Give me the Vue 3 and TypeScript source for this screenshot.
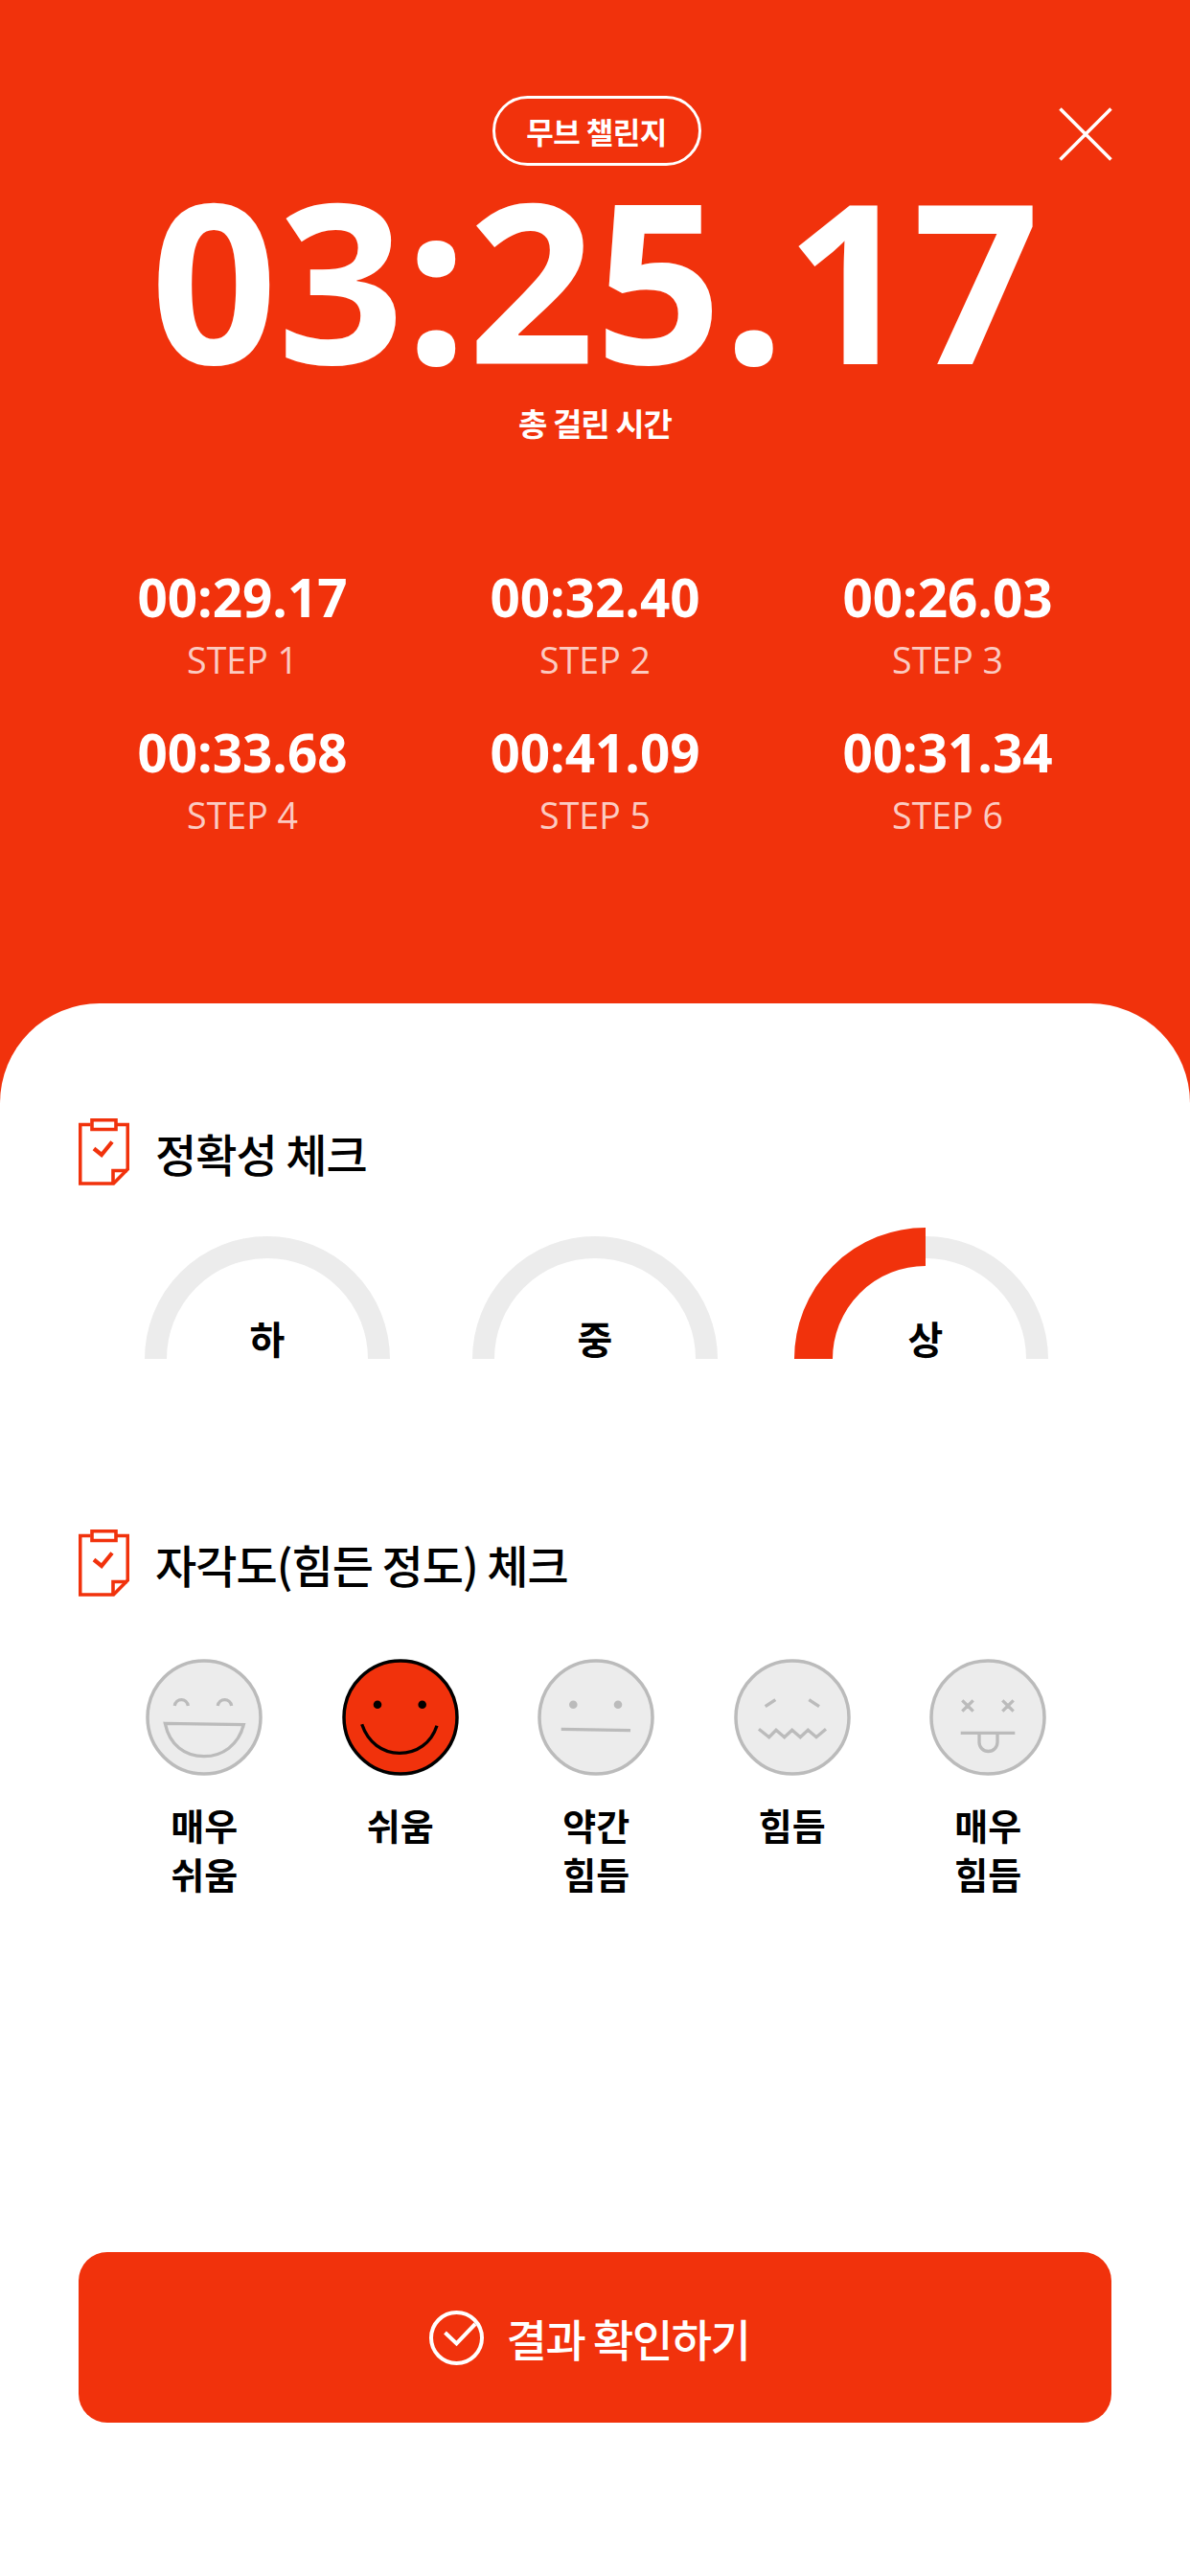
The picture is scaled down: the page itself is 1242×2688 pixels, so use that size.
<script setup lang="ts">
const steps = [
  { time: '00:29.17', label: 'STEP 1' },
  { time: '00:32.40', label: 'STEP 2' },
  { time: '00:26.03', label: 'STEP 3' },
  { time: '00:33.68', label: 'STEP 4' },
  { time: '00:41.09', label: 'STEP 5' },
  { time: '00:31.34', label: 'STEP 6' },
]
const levels = [
  { label: '하', active: false },
  { label: '중', active: false },
  { label: '상', active: true },
]
const faces = [
  { kind: 'laugh', lines: ['매우', '쉬움'] },
  { kind: 'smile', lines: ['쉬움'] },
  { kind: 'flat', lines: ['약간', '힘듬'] },
  { kind: 'wavy', lines: ['힘듬'] },
  { kind: 'dead', lines: ['매우', '힘듬'] },
]
</script>

<template>
  <div class="page">
    <header class="hero">
      <svg class="close" viewBox="0 0 56 56" aria-label="닫기">
        <path d="M1.500 1.500 54.500 54.500M54.500 1.500 1.500 54.500" />
      </svg>
      <div class="pill">무브 챌린지</div>
      <div class="total">03:25.17</div>
      <div class="total-label">총 걸린 시간</div>
      <div class="steps">
        <div v-for="s in steps" :key="s.label" class="step">
          <div class="step-time">{{ s.time }}</div>
          <div class="step-label">{{ s.label }}</div>
        </div>
      </div>
    </header>

    <main class="sheet">
      <section class="section">
        <h2 class="title">
          <svg class="clip" viewBox="0 0 53 70">
            <path d="M12.500 6.500H1.700V68H36.500L51.300 53V6.500H40" />
            <path d="M14 1.700H39V11.500H14Z" />
            <path d="M36 68V54.500H51" />
            <path class="tick" d="M16 31.500 24 38 35 24.500" />
          </svg>
          <span>정확성 체크</span>
        </h2>
        <div class="gauges">
          <div v-for="l in levels" :key="l.label" class="gauge">
            <svg class="arc" viewBox="0 0 256 128">
              <path class="track" d="M11.500 128A116.500 116.500 0 0 1 244.500 128" />
              <path v-if="l.active" class="fill" d="M11 128A117 117 0 0 1 128 11" />
            </svg>
            <span class="gauge-label">{{ l.label }}</span>
          </div>
        </div>
      </section>

      <section class="section second">
        <h2 class="title">
          <svg class="clip" viewBox="0 0 53 70">
            <path d="M12.500 6.500H1.700V68H36.500L51.300 53V6.500H40" />
            <path d="M14 1.700H39V11.500H14Z" />
            <path d="M36 68V54.500H51" />
            <path class="tick" d="M16 31.500 24 38 35 24.500" />
          </svg>
          <span>자각도(힘든 정도) 체크</span>
        </h2>
        <div class="faces">
          <div v-for="f in faces" :key="f.kind" class="face-cell">
            <svg class="face" :class="{ on: f.kind === 'smile' }" viewBox="0 0 122 122">
              <circle class="head" cx="61" cy="61" r="59" />
              <template v-if="f.kind === 'laugh'">
                <path d="M30.300 49C31.500 40.500 43.100 40.500 44.300 49M75.300 49C76.500 40.500 88.400 40.500 89.600 49" />
                <path d="M20.300 67.300 102.300 68.700C97 90 80 101.700 61 101.700 41 101.700 25 90 20.300 67.300Z" />
              </template>
              <template v-else-if="f.kind === 'smile'">
                <circle class="dot" cx="37" cy="47.700" r="4.300" />
                <circle class="dot" cx="83.700" cy="47.700" r="4.300" />
                <path d="M20.700 68.300C27 87 42 98.300 60 98.300 78 98.300 93 88 99 69.700" />
              </template>
              <template v-else-if="f.kind === 'flat'">
                <circle class="dot" cx="37.300" cy="47.700" r="4.300" />
                <circle class="dot" cx="84" cy="47.700" r="4.300" />
                <path d="M24.700 73.300 97 74.700" />
              </template>
              <template v-else-if="f.kind === 'wavy'">
                <path d="M32.700 49.700 43.300 42.700M78.300 42.700 89 49.700" />
                <path d="M26 73.300 36.700 81.700 44 74.300 52.700 81.700 60.700 74.300 69.300 81.700 77.300 74.300 86 81.700 96 73.300" />
              </template>
              <template v-else>
                <path d="M34.300 43.300 45.700 54.700M45.700 43.300 34.300 54.700M76.300 43.300 87.700 54.700M87.700 43.300 76.300 54.700" />
                <path d="M32.700 77.300H89.300M52 77.300V87A9.500 9.500 0 0 0 71 87V77.300" />
              </template>
            </svg>
            <div class="face-label">
              <div v-for="line in f.lines" :key="line">{{ line }}</div>
            </div>
          </div>
        </div>
      </section>

      <button class="cta" type="button">
        <svg class="cta-icon" viewBox="0 0 57 57">
          <circle cx="28.500" cy="28.500" r="26.500" />
          <path d="M16.500 23 28.500 34.500 48 14" />
        </svg>
        <span>결과 확인하기</span>
      </button>
    </main>
  </div>
</template>

<style>
html, body { margin: 0; background: #fff; }
</style>

<style scoped>
.page {
  position: relative;
  width: 1242px;
  height: 2688px;
  display: flex;
  flex-direction: column;
  background: #f1320c;
  font-family: "Open Sans", "Noto Sans CJK KR", sans-serif;
  overflow: hidden;
}
.hero {
  position: relative;
  height: 1047px;
  padding-top: 100px;
  box-sizing: border-box;
  display: flex;
  flex-direction: column;
  align-items: center;
  color: #fff;
}
.close {
  position: absolute;
  top: 112px;
  left: 1104.500px;
  width: 56px;
  height: 56px;
  fill: none;
  stroke: #fff;
  stroke-width: 3.500;
}
.pill {
  width: 218px;
  height: 73px;
  margin-left: 3px;
  box-sizing: border-box;
  border: 3px solid #fff;
  border-radius: 37px;
  display: flex;
  align-items: center;
  justify-content: center;
  font-family: "Noto Sans CJK KR", sans-serif;
  font-size: 31px;
  font-weight: 700;
  letter-spacing: -0.5px;
}
.total {
  margin-top: -7px;
  font-size: 232px;
  font-weight: 700;
  line-height: 248px;
  white-space: nowrap;
}
.total-label {
  margin-top: 4px;
  font-family: "Noto Sans CJK KR", sans-serif;
  font-size: 33px;
  font-weight: 700;
  line-height: 46px;
  letter-spacing: -1px;
}
.steps {
  margin-top: 126px;
  width: 1104px;
  display: grid;
  grid-template-columns: repeat(3, 368px);
  row-gap: 30px;
  text-align: center;
}
.step-time {
  font-size: 54.800px;
  font-weight: 700;
  line-height: 66px;
}
.step-label {
  font-size: 37.500px;
  font-weight: 400;
  line-height: 66px;
  color: rgba(255, 255, 255, 0.76);
}
.sheet {
  flex: 1;
  display: flex;
  flex-direction: column;
  background: #fff;
  border-radius: 104px 104px 0 0;
  padding: 120px 82px 160px;
  box-sizing: border-box;
}
.section.second {
  margin-top: 178px;
}
.title {
  margin: 0;
  height: 70px;
  display: flex;
  align-items: center;
  gap: 27px;
  font-family: "Noto Sans CJK KR", sans-serif;
  font-size: 47px;
  font-weight: 500;
  color: #000;
  letter-spacing: -1px;
  white-space: pre;
}
.clip {
  width: 53px;
  height: 70px;
  flex: none;
  fill: none;
  stroke: #f1320c;
  stroke-width: 3.600;
}
.clip .tick {
  stroke-width: 4.200;
}
.gauges {
  margin-top: 53px;
  padding-left: 69px;
  display: flex;
  gap: 86px;
}
.gauge {
  position: relative;
  width: 256px;
  height: 128px;
}
.gauge:last-child {
  margin-left: 3px;
}
.arc {
  display: block;
  width: 256px;
  height: 128px;
  overflow: visible;
  fill: none;
}
.track {
  stroke: #ececec;
  stroke-width: 23;
}
.fill {
  stroke: #f1320c;
  stroke-width: 40;
}
.gauge-label {
  position: absolute;
  left: 0;
  right: 0;
  bottom: -7px;
  text-align: center;
  font-family: "Noto Sans CJK KR", sans-serif;
  font-size: 40px;
  font-weight: 700;
  line-height: 58px;
  color: #000;
}
.faces {
  margin-top: 65px;
  margin-left: 29px;
  display: grid;
  grid-template-columns: repeat(5, 204.500px);
}
.face-cell {
  display: flex;
  flex-direction: column;
  align-items: center;
}
.face {
  width: 122px;
  height: 122px;
  fill: none;
  stroke: #bbb;
  stroke-width: 3.300;
}
.head {
  fill: #ececec;
  stroke-width: 3.500;
}
.dot {
  fill: #bbb;
  stroke: none;
}
.face.on {
  stroke: #000;
}
.face.on .head {
  fill: #f1320c;
}
.face.on .dot {
  fill: #000;
}
.face-label {
  margin-top: 25px;
  font-family: "Noto Sans CJK KR", sans-serif;
  font-size: 38px;
  font-weight: 700;
  line-height: 51px;
  color: #000;
  text-align: center;
}
.cta {
  margin-top: auto;
  width: 1078px;
  height: 178px;
  padding: 0 12px 0 0;
  border: 0;
  border-radius: 30px;
  background: #f1320c;
  color: #fff;
  display: flex;
  align-items: center;
  justify-content: center;
  gap: 24px;
  font-family: "Noto Sans CJK KR", sans-serif;
  font-size: 46px;
  font-weight: 500;
  letter-spacing: -1.500px;
}
.cta-icon {
  width: 57px;
  height: 57px;
  fill: none;
  stroke: #fff;
  stroke-width: 4;
}
</style>
